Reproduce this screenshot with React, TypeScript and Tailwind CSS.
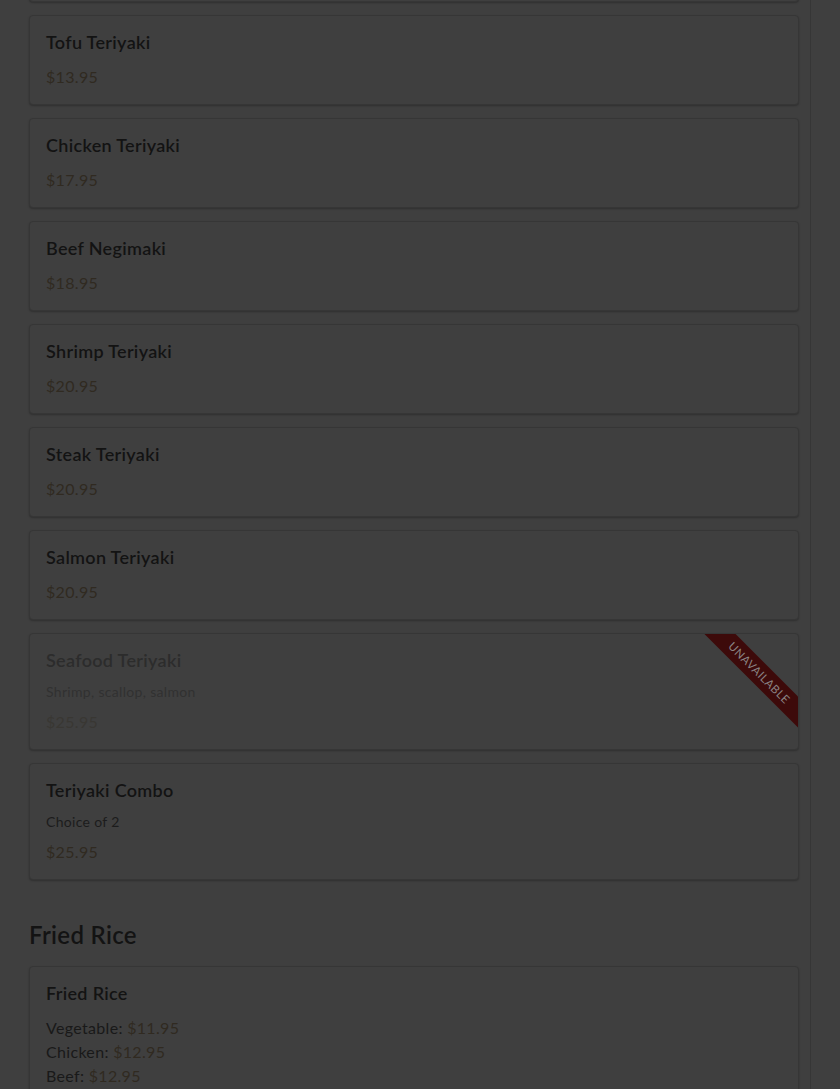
import React from "react";

type Item = {
  name: string;
  desc?: string;
  price?: string;
  prices?: { label: string; price: string }[];
  unavailable?: boolean;
};

const teriyaki: Item[] = [
  { name: "Vegetable Teriyaki", price: "$12.95" },
  { name: "Tofu Teriyaki", price: "$13.95" },
  { name: "Chicken Teriyaki", price: "$17.95" },
  { name: "Beef Negimaki", price: "$18.95" },
  { name: "Shrimp Teriyaki", price: "$20.95" },
  { name: "Steak Teriyaki", price: "$20.95" },
  { name: "Salmon Teriyaki", price: "$20.95" },
  { name: "Seafood Teriyaki", desc: "Shrimp, scallop, salmon", price: "$25.95", unavailable: true },
  { name: "Teriyaki Combo", desc: "Choice of 2", price: "$25.95" },
];

const friedRice: Item[] = [
  {
    name: "Fried Rice",
    prices: [
      { label: "Vegetable", price: "$11.95" },
      { label: "Chicken", price: "$12.95" },
      { label: "Beef", price: "$12.95" },
      { label: "Shrimp", price: "$14.95" },
    ],
  },
];

function MenuCard({ item, className = "" }: { item: Item; className?: string }) {
  const muted = item.unavailable;
  return (
    <div
      className={`relative overflow-hidden rounded-[4px] border border-[#363636] bg-[#3f3f3f] px-4 pt-[13px] pb-[15px] shadow-[0_1px_2px_rgba(0,0,0,0.25)] ${className}`}
    >
      <h3
        className={`text-[18px] leading-[26px] font-semibold ${
          muted ? "text-[#2c2c2c]" : "text-[#131313]"
        }`}
      >
        {item.name}
      </h3>
      {item.desc && (
        <p
          className={`mt-[9px] text-[14px] leading-[20px] ${
            muted ? "text-[#313131]" : "text-[#1c1c1c]"
          }`}
        >
          {item.desc}
        </p>
      )}
      {item.price && (
        <p
          className={`${item.desc ? "mt-2" : "mt-[10px]"} text-[16px] leading-[24px] ${
            muted ? "text-[#393733]" : "text-[#302a21]"
          }`}
        >
          {item.price}
        </p>
      )}
      {item.prices && (
        <ul className="mt-[10px] text-[16px] leading-[24px]">
          {item.prices.map((p) => (
            <li key={p.label} className="text-[#191919]">
              {p.label}: <span className="text-[#302a21]">{p.price}</span>
            </li>
          ))}
        </ul>
      )}
      {muted && (
        <div className="absolute right-[-28px] top-[28px] flex h-[22px] w-[134px] rotate-45 items-center justify-center bg-[#3d0a0a] text-[11.5px] tracking-[0.04em] text-[#8a8484] uppercase">
          Unavailable
        </div>
      )}
    </div>
  );
}

export default function App() {
  return (
    <div
      className="flex h-[1089px] overflow-hidden bg-[#3f3f3f] tracking-[0.02em]"
      style={{ fontFamily: "Lato, 'Noto Sans', sans-serif" }}
    >
      <main className="w-[811px] shrink-0 border-r border-[#363636] pl-[29px] pr-[11px]">
        <div className="flex flex-col gap-[13px]">
          {teriyaki.map((item, i) => (
            <MenuCard key={item.name} item={item} className={i === 0 ? "-mt-[88px]" : ""} />
          ))}
        </div>

        <h2 className="mt-[39px] mb-[15px] text-[24px] leading-[32px] font-semibold text-[#131313]">
          Fried Rice
        </h2>
        <div className="flex flex-col gap-[13px]">
          {friedRice.map((item) => (
            <MenuCard key={item.name} item={item} />
          ))}
        </div>
      </main>
      <div className="flex-1" />
    </div>
  );
}
